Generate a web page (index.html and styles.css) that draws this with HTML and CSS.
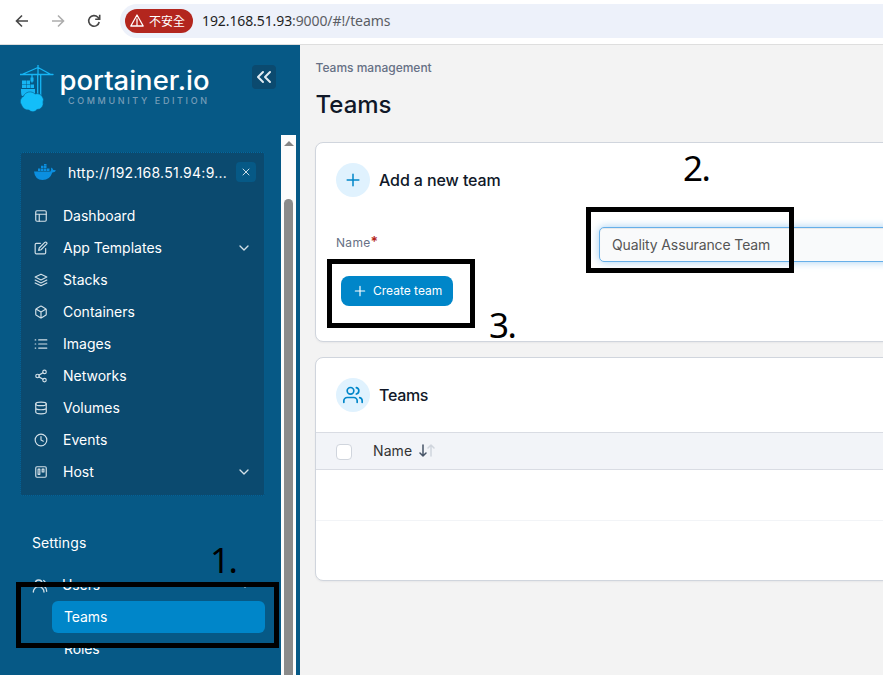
FILE: index.html
```html
<!DOCTYPE html>
<html lang="zh-Hant">
<head>
<meta charset="utf-8">
<title>Portainer</title>
<link rel="stylesheet" href="styles.css">
</head>
<body>
<header class="browser-bar">
  <svg class="nav-icon" viewBox="0 0 16 16"><path d="M14 8H3M8 2.500 2.500 8 8 13.500"/></svg>
  <svg class="nav-icon disabled" viewBox="0 0 16 16"><path d="M2 8h11M8 2.500 13.500 8 8 13.500"/></svg>
  <svg class="nav-icon" viewBox="0 0 16 16"><path d="M13.200 9a5.300 5.300 0 1 1-1.300-4.700L13.500 6M13.700 1.800v4.500H9.200"/></svg>
  <div class="address">
    <span class="insecure"><svg class="warn" viewBox="0 0 14 13"><path d="M7 1 13.200 12H.800ZM7 5v3.500M7 9.500v1.200"/></svg>不安全</span>
    <span class="url"><b>192.168.51.93</b>:9000/#!/teams</span>
  </div>
</header>
<div class="app">
  <aside class="sidebar">
    <div class="brand">
      <svg class="logo" viewBox="0 0 192 50">
        <g fill="none" stroke="#16b5f4" stroke-width="1.300">
          <path d="M0 9.500h33M3 9 18 2.500 30 9M18 0v10M17.700 10v22M20.700 10v22M12 10v7"/>
        </g>
        <path fill="#16b5f4" d="M10.500 12.500h3v4h-3zM2 15.500h4v3.500H2zM6.500 15.500h3.500v3.500H6.500zM2 19.500h4v3.500H2zM6.500 19.500h3.500v3.500H6.500zM10.500 19.500h3.500v3.500h-3.500zM1 24h14v7H2q-1-1-1-7z"/>
        <path fill="#13bef9" stroke="#065986" stroke-width=".6" d="M3.500 31a7 7 0 0 1 11.500-2 6 6 0 0 1 7.500 3 5 5 0 0 1 .5 5 6 6 0 0 1-6 7.500 5 5 0 0 1-8 0.500 7 7 0 0 1-7.500-5 6 6 0 0 1 2-9z"/>
        <text class="wordmark" x="39.500" y="25" textLength="150" lengthAdjust="spacingAndGlyphs">portainer.io</text>
        <text class="edition" x="48" y="39.300" textLength="139">COMMUNITY EDITION</text>
      </svg>
      <span class="collapse"><svg viewBox="0 0 24 24"><path d="m11 17-5-5 5-5M18 17l-5-5 5-5"/></svg></span>
    </div>
    <div class="scroll-area">
      <nav class="menu">
        <section class="environment">
          <div class="env-head">
            <svg class="whale" viewBox="0 0 22 17"><path d="M4 4.500h2.500V7H4zM7 4.500h2.500V7H7zM10 4.500h2.500V7H10zM13 4.500h2.500V7H13zM7 1.800h2.500V4H7zM10 1.800h2.500V4H10zM10 0h2.500v1.400H10zM0 7.500h16.500q1-2.500.5-4 2 .8 2.300 2.500 1.700-.3 2.700.500-1 2-3.700 2Q16 16 8.500 16 1 16 0 7.500z"/></svg>
            <span class="env-name">http://192.168.51.94:9...</span>
            <span class="env-close"><svg viewBox="0 0 24 24"><path d="M18 6 6 18M6 6l12 12"/></svg></span>
          </div>
          <div class="item"><svg viewBox="0 0 24 24"><rect x="3" y="3" width="18" height="18" rx="2"/><path d="M3 9h18M9 21V9"/></svg>Dashboard</div>
          <div class="item"><svg viewBox="0 0 24 24"><path d="M11 4H4a2 2 0 0 0-2 2v14a2 2 0 0 0 2 2h14a2 2 0 0 0 2-2v-7M18.500 2.500a2.120 2.120 0 0 1 3 3L12 15l-4 1 1-4Z"/></svg>App Templates<svg class="chevron" viewBox="0 0 24 24"><path d="m6 9 6 6 6-6"/></svg></div>
          <div class="item"><svg viewBox="0 0 24 24"><path d="m12 2 10 5-10 5L2 7ZM2 12l10 5 10-5M2 17l10 5 10-5"/></svg>Stacks</div>
          <div class="item"><svg viewBox="0 0 24 24"><path d="M21 16V8a2 2 0 0 0-1-1.730l-7-4a2 2 0 0 0-2 0l-7 4A2 2 0 0 0 3 8v8a2 2 0 0 0 1 1.730l7 4a2 2 0 0 0 2 0l7-4A2 2 0 0 0 21 16zM3.300 7 12 12l8.700-5M12 22V12"/></svg>Containers</div>
          <div class="item"><svg viewBox="0 0 24 24"><path d="M8 5h14M8 12h14M8 19h14M2 5h1M2 12h1M2 19h1"/></svg>Images</div>
          <div class="item"><svg viewBox="0 0 24 24"><circle cx="18" cy="5" r="3"/><circle cx="6" cy="12" r="3"/><circle cx="18" cy="19" r="3"/><path d="m8.600 13.500 6.800 4M15.400 6.500l-6.800 4"/></svg>Networks</div>
          <div class="item"><svg viewBox="0 0 24 24"><ellipse cx="12" cy="5" rx="9" ry="3"/><path d="M21 12c0 1.660-4 3-9 3s-9-1.340-9-3M3 5v14c0 1.660 4 3 9 3s9-1.340 9-3V5"/></svg>Volumes</div>
          <div class="item"><svg viewBox="0 0 24 24"><circle cx="12" cy="12" r="10"/><path d="M12 6v6l4 2"/></svg>Events</div>
          <div class="item"><svg viewBox="0 0 24 24"><rect x="3" y="3" width="18" height="18" rx="2"/><path d="M7 7h3v9H7zM14 7h3v5h-3z"/></svg>Host<svg class="chevron" viewBox="0 0 24 24"><path d="m6 9 6 6 6-6"/></svg></div>
        </section>
        <h2 class="section-title">Settings</h2>
        <div class="item users"><svg viewBox="0 0 24 24"><path d="M18 21a8 8 0 0 0-16 0M22 20c0-3.400-2-6.500-4-8a5 5 0 0 0-.5-8.300"/><circle cx="10" cy="8" r="5"/></svg>Users<svg class="chevron" viewBox="0 0 24 24"><path d="m6 9 6 6 6-6"/></svg></div>
        <div class="sub active">Teams</div>
        <div class="sub">Roles</div>
      </nav>
      <div class="scrollbar"><i class="arrow-up"></i><i class="thumb"></i></div>
    </div>
  </aside>
  <main class="content">
    <div class="breadcrumb">Teams management</div>
    <h1>Teams</h1>
    <section class="card form-card">
      <div class="card-head"><span class="badge"><svg viewBox="0 0 24 24"><path d="M12 5v14M5 12h14"/></svg></span>Add a new team</div>
      <div class="field"><label>Name<em>*</em></label><div class="input">Quality Assurance Team</div></div>
      <div class="create"><svg viewBox="0 0 24 24"><path d="M12 4v16M4 12h16"/></svg><span>Create team</span></div>
    </section>
    <section class="card table-card">
      <div class="card-head"><span class="badge"><svg viewBox="0 0 24 24"><path d="M17 21v-2a4 4 0 0 0-4-4H5a4 4 0 0 0-4 4v2M23 21v-2a4 4 0 0 0-3-3.870M16 3.130a4 4 0 0 1 0 7.750"/><circle cx="9" cy="7" r="4"/></svg></span>Teams</div>
      <div class="thead"><i class="checkbox"></i><span>Name</span><svg class="sort" viewBox="0 0 16 14"><path class="down" d="M4 1v11M1 9l3 3 3-3"/><path class="up" d="M12 12V1M9 4l3-3 3 3"/></svg></div>
      <div class="row"></div>
    </section>
  </main>
</div>
<div class="frame frame-menu"></div>
<div class="frame frame-input"></div>
<div class="frame frame-button"></div>
<span class="step step-one">1.</span>
<span class="step step-two">2.</span>
<span class="step step-three">3.</span>
</body>
</html>
```
FILE: styles.css
```css
* { box-sizing: border-box; }
body {
  margin: 0;
  width: 883px;
  height: 675px;
  overflow: hidden;
  position: relative;
  font: 14px Inter, "Liberation Sans", sans-serif;
  background: #f3f3f3;
}
svg { fill: none; stroke: currentColor; stroke-width: 2; stroke-linecap: round; stroke-linejoin: round; flex: none; }

.browser-bar {
  height: 45px;
  padding: 0 0 3px 14px;
  display: flex;
  align-items: center;
  gap: 20px;
  background: #fff;
  border-bottom: 1px solid #dedede;
  color: #474747;
}
.nav-icon { width: 16px; height: 16px; stroke-width: 1.6; stroke-linecap: butt; stroke-linejoin: miter; }
.nav-icon.disabled { color: #adadad; }
.address {
  flex: 1;
  height: 34px;
  margin-left: -2px;
  padding-left: 5px;
  display: flex;
  align-items: center;
  gap: 9px;
  border-radius: 17px 0 0 17px;
  background: #edf1fa;
}
.insecure {
  width: 68px;
  height: 24px;
  padding-left: 5px;
  display: flex;
  align-items: center;
  gap: 5px;
  border-radius: 12px;
  background: #b3261e;
  color: #fff;
  font: 12px/24px "Noto Sans CJK TC", sans-serif;
}
.warn { width: 14px; height: 13px; stroke-width: 1.3; }
.url { font: 14px/20px "Noto Sans", sans-serif; letter-spacing: -0.1px; color: #5b5e64; }
.url b { font-weight: 400; color: #1f1f1f; }

.app { display: flex; height: 630px; }
.sidebar { width: 300px; display: flex; flex-direction: column; background: #065986; color: #fff; }
.brand { height: 90px; padding: 20px 24px 0 20px; display: flex; justify-content: space-between; align-items: flex-start; }
.logo { width: 192px; height: 50px; stroke: none; }
.wordmark { font: 500 26px Inter, sans-serif; fill: #fff; stroke: none; }
.edition { font: 500 9px Inter, sans-serif; fill: #769db8; stroke: none; }
.collapse {
  width: 24px;
  height: 24px;
  border-radius: 4px;
  display: grid;
  place-items: center;
  background: #0b4a6f;
}
.collapse svg { width: 24px; height: 24px; color: #e0ebf2; }
.scroll-area { flex: 1; display: flex; min-height: 0; }
.menu { width: 281px; padding: 17px 16px 0 20px; overflow: hidden; }
.environment { height: 344px; border: 1px dotted #026aa2; border-radius: 3px; background: #0b4a6f; padding: 0 8px 8px 13px; }
.env-head { height: 38px; display: flex; align-items: center; margin-bottom: 8px; }
.whale { width: 22px; height: 17px; fill: #0b8fe0; stroke: none; }
.env-name { flex: 1; padding-left: 12px; letter-spacing: 0.27px; white-space: nowrap; }
.env-close { width: 20px; height: 20px; border-radius: 4px; display: grid; place-items: center; background: #065986; }
.env-close svg { width: 12px; height: 12px; stroke-width: 1.6; }
.item { height: 32px; display: flex; align-items: center; letter-spacing: 0; }
.item svg { width: 14px; height: 14px; margin-right: 15px; color: #d3e0e8; position: relative; top: 1px; }
.item .chevron { width: 16px; height: 16px; margin: 0 4px 0 auto; top: 1px; }
.section-title { margin: 38px 0 16px 12px; font: 400 14px/18px Inter, sans-serif; letter-spacing: 0.1px; }
.users { margin: 0 0 1px 12px; letter-spacing: -0.1px; }
.users svg { width: 16px; height: 16px; margin-right: 14px; top: 2px; }
.users .chevron { margin-right: 12px; top: 1px; }
.sub { height: 32px; margin-left: 32px; padding-left: 12px; line-height: 32px; letter-spacing: -0.1px; border-radius: 6px; }
.sub.active { background: #0086c9; }
.scrollbar { width: 15px; background: #fcfcfc; display: flex; flex-direction: column; align-items: center; }
.arrow-up { margin-top: 6px; border: 5px solid transparent; border-top: 0; border-bottom-color: #858585; }
.thumb { width: 9px; flex: 1; margin-top: 53px; background: #8b8b8b; border-radius: 5px 5px 0 0; }

.content { flex: 1; padding: 15px 0 0 15px; min-width: 0; }
.breadcrumb { font-size: 12px; font-weight: 500; line-height: 16px; letter-spacing: 0; color: #667085; }
h1 { margin: 13px 0 22px; font-size: 24px; font-weight: 500; line-height: 31px; letter-spacing: 0; color: #101828; }
.breadcrumb, h1 { padding-left: 0.5px; }
.card { width: 600px; background: #fff; border: 1px solid #d0d5dd; border-radius: 8px; box-shadow: 0 1px 2px rgba(16, 24, 40, .05); }
.form-card { height: 200px; padding: 20px; }
.card-head { display: flex; align-items: center; gap: 9px; font-size: 16px; font-weight: 500; letter-spacing: -0.1px; color: #101828; }
.badge { width: 34px; height: 34px; border-radius: 50%; display: grid; place-items: center; background: #e0f2fe; color: #0086c9; }
.badge svg { width: 20px; height: 20px; }
.form-card .badge svg { stroke-width: 1.8; }
.field { display: flex; margin-top: 30px; }
.field label { width: 263px; padding-top: 7px; font-size: 12px; line-height: 18px; letter-spacing: 0.3px; color: #667085; }
.field em { color: #b42318; font-style: normal; font-weight: 600; font-size: 14px; line-height: 10px; }
.input {
  flex: 1;
  height: 35px;
  padding-left: 12px;
  line-height: 34px;
  letter-spacing: -0.12px;
  border: 1px solid #66afe9;
  border-radius: 5px;
  background: #f9fafb;
  color: #555;
  box-shadow: inset 0 1px 1px rgba(0, 0, 0, .075), 0 0 8px rgba(102, 175, 233, .6);
}
.create {
  width: 112px;
  height: 30px;
  margin: 14px 0 0 5px;
  padding-left: 12px;
  display: flex;
  align-items: center;
  gap: 6px;
  border-radius: 8px;
  background: #0086c9;
  color: #fff;
  font-size: 12px;
}
.create span { padding-bottom: 1px; }
.create svg { width: 14px; height: 14px; }
.table-card { height: 224px; margin-top: 15px; }
.table-card .card-head { height: 74px; padding-left: 20px; letter-spacing: -0.3px; }
.thead { height: 38px; padding-left: 20px; display: flex; align-items: center; border: solid #d9dce3; border-width: 1px 0; background: #f2f4f8; color: #333; letter-spacing: 0.1px; }
.thead span { padding-bottom: 1px; }
.checkbox { width: 16px; height: 16px; margin: 2px 21px 0 0; border: 1px solid #d0d5dd; border-radius: 4px; background: #fff; }
.sort { width: 16px; height: 14px; margin-left: 7px; stroke-width: 1.5; }
.down { stroke: #475467; }
.up { stroke: #d0d5dd; }
.row { height: 51px; border-bottom: 1px solid #f2f4f7; }

.frame { position: absolute; border: 5px solid #000; }
.frame-menu { left: 16px; top: 582px; width: 263px; height: 66px; }
.frame-input { left: 586px; top: 207px; width: 208px; height: 66px; }
.frame-button { left: 327px; top: 259px; width: 148px; height: 69px; }
.step { position: absolute; color: #000; font: 400 35px/40px "Noto Sans", sans-serif; letter-spacing: -1.5px; }
.step-one { left: 210px; top: 540px; }
.step-two { left: 683px; top: 148px; }
.step-three { left: 489px; top: 305px; }
```
